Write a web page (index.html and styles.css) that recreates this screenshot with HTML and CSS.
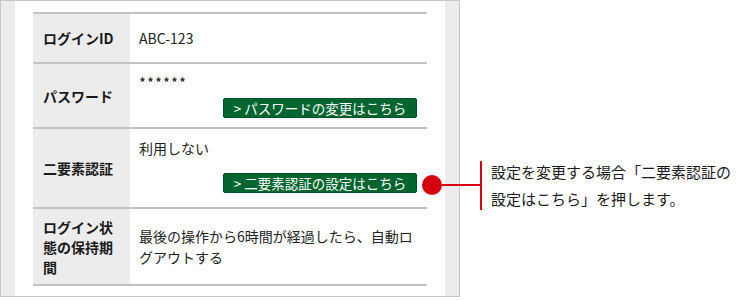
FILE: index.html
```html
<!DOCTYPE html>
<html lang="ja">
<head>
  <meta charset="UTF-8" />
  <meta name="viewport" content="width=device-width, initial-scale=1.0" />
  <title>アカウント設定</title>
  <link rel="stylesheet" href="styles.css">
</head>

<body>
  <div class="frame">
    <div class="panel">
      <div class="table">
        <div class="row row-id">
          <div class="label">ログインID</div>
          <div class="value">ABC-123</div>
        </div>
        <div class="row row-pass">
          <div class="label">パスワード</div>
          <div class="value value-top">
            <span class="mask">******</span>
            <a class="btn btn-pass" href="#">&gt;&nbsp;パスワードの変更はこちら</a>
          </div>
        </div>
        <div class="row row-2fa">
          <div class="label">二要素認証</div>
          <div class="value value-top">
            <span>利用しない</span>
            <a class="btn btn-2fa" href="#">&gt;&nbsp;二要素認証の設定はこちら</a>
          </div>
        </div>
        <div class="row row-keep">
          <div class="label">ログイン状態の保持期間</div>
          <div class="value">最後の操作から6時間が経過したら、自動ログアウトする</div>
        </div>
      </div>
    </div>
  </div>

  <!-- callout pointing at the 2FA button -->
  <div class="callout">
    <span class="dot"></span>
    <span class="stem"></span>
    <span class="bar"></span>
    <p class="note">設定を変更する場合「二要素認証の<br>設定はこちら」を押します。</p>
  </div>
</body>
</html>
```

FILE: styles.css
```css
body {
  margin: 0;
  font-family: "Noto Sans CJK JP", "Noto Sans", sans-serif;
  background: #fff;
  color: #222;
}

.frame {
  width: 460px;
  box-sizing: border-box;
  background: #ececec;
  border: 1px solid #c6c6c6;
  padding: 0 14px;
}

.panel {
  background: #fff;
  padding: 11px 18px 10px;
}

.table {
  border-top: 2px solid #c2c2c2;
}

.row {
  display: flex;
  box-sizing: border-box;
  border-bottom: 2px solid #c2c2c2;
}

.row-id { height: 50px; }
.row-pass { height: 65px; }
.row-2fa { height: 80px; }
.row-keep { height: 77px; }

.label {
  width: 97px;
  flex-shrink: 0;
  box-sizing: border-box;
  padding: 0 15px 0 10px;
  background: #ececec;
  display: flex;
  align-items: center;
  font-size: 14px;
  font-weight: bold;
  line-height: 20px;
  color: #1a1a1a;
}

.value {
  flex: 1;
  padding: 0 10px 0 9px;
  display: flex;
  flex-direction: column;
  justify-content: center;
  font-size: 14px;
  line-height: 21px;
  color: #222;
}

.row-pass .value { padding-top: 8px; }
.row-2fa .value { padding-top: 9px; }

.value-top {
  justify-content: flex-start;
}

.mask {
  font-size: 15px;
  letter-spacing: 1px;
}

.btn {
  align-self: flex-end;
  width: 194px;
  height: 20px;
  box-sizing: border-box;
  background: #00652f;
  border: 1px solid #00532a;
  border-radius: 2px;
  color: #fff;
  font-size: 13.5px;
  line-height: 18px;
  text-align: center;
  text-decoration: none;
}

.btn-pass { margin-top: 5px; }
.btn-2fa { margin-top: 14px; }

.callout {
  position: absolute;
  left: 422px;
  top: 158px;
  display: flex;
  align-items: center;
}

.dot {
  width: 20px;
  height: 20px;
  border-radius: 50%;
  background: #d6000f;
}

.stem {
  width: 38px;
  height: 2px;
  background: #d6000f;
}

.bar {
  width: 2px;
  height: 49px;
  background: #d6000f;
}

.note {
  margin: 0 0 0 9px;
  font-size: 15px;
  line-height: 27px;
  color: #1a1a1a;
  white-space: nowrap;
}
```
